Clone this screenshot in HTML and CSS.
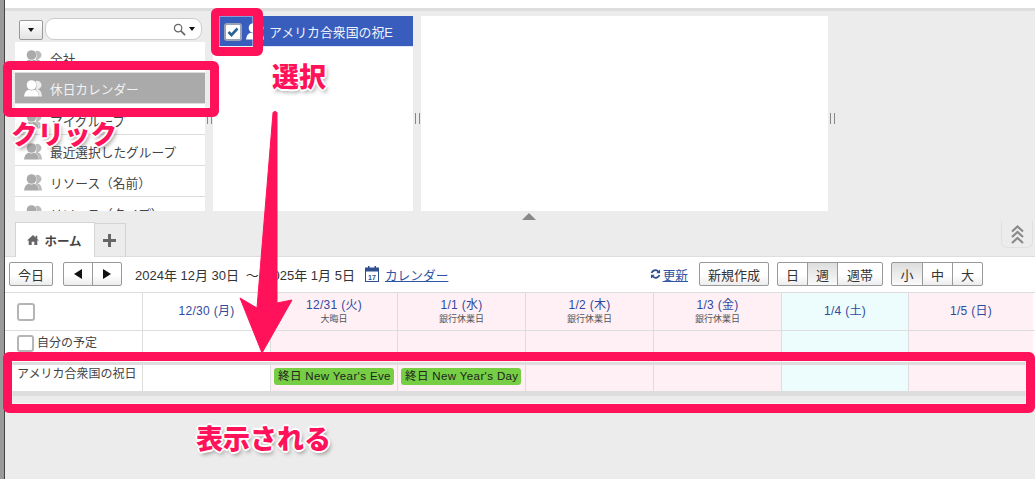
FILE: index.html
```html
<!DOCTYPE html>
<html lang="ja">
<head>
<meta charset="utf-8">
<title>カレンダー</title>
<link rel="stylesheet" href="styles.css">
</head>
<body>
<svg width="0" height="0" class="defs">
  <symbol id="people" viewBox="0 0 18 17">
    <path d="M11.500 1.200a4.200 4.200 0 1 1 1.800 8c2.700.3 4.400 2.800 4.700 7.300h-2.800c-.3-3.200-1.300-5.500-3.600-6.800 1.300-2.500 1.200-6-.1-8.500z" opacity=".8"/>
    <circle cx="7.500" cy="5" r="4.800"/>
    <path d="M0 16.500c.4-4 2.200-6.200 4.700-6.800 1.700 1 3.900 1 5.600 0 2.500.6 4.300 2.800 4.700 6.800z"/>
  </symbol>
</svg>
<div class="page">
  <div class="topbar"></div>
  <div class="panels">
    <div class="col-groups">
      <div class="search-row">
        <button class="drop-btn"><span class="caret"></span></button>
        <div class="search-box">
          <svg class="lens" viewBox="0 0 14 14"><circle cx="5.500" cy="5.500" r="4" fill="none" stroke="#666" stroke-width="1.300"/><path d="M8.500 8.500l4.500 4.500" stroke="#666" stroke-width="1.800"/></svg>
          <span class="caret"></span>
        </div>
      </div>
      <ul class="group-list">
        <li class="group"><svg class="ppl"><use href="#people"/></svg>全社</li>
        <li class="group selected"><svg class="ppl"><use href="#people"/></svg>休日カレンダー</li>
        <li class="group"><svg class="ppl"><use href="#people"/></svg>マイグループ</li>
        <li class="group"><svg class="ppl"><use href="#people"/></svg>最近選択したグループ</li>
        <li class="group"><svg class="ppl"><use href="#people"/></svg>リソース（名前）</li>
        <li class="group"><svg class="ppl"><use href="#people"/></svg>リソース（タイプ）</li>
      </ul>
    </div>
    <div class="splitter"><i></i></div>
    <div class="col-members">
      <div class="member">
        <span class="check"><svg viewBox="0 0 14 14"><path d="M2.500 7l3 3 6-6.500" fill="none" stroke="#2a6496" stroke-width="2.600"/></svg></span>
        <svg class="member-ic"><use href="#people"/></svg>
        <span class="member-name">アメリカ合衆国の祝E</span>
      </div>
    </div>
    <div class="splitter"><i></i></div>
    <div class="col-blank"></div>
    <div class="splitter"><i></i></div>
  </div>
  <div class="collapse-row"><span class="tri"></span></div>
  <div class="tabs">
    <div class="tab home">
      <svg class="home-ic" viewBox="0 0 12 10"><path d="M6 0L0 5.500h1.700V10h3V6.800h2.600V10h3V5.500H12L10.300 4V.8H8.600v1.600z" fill="#666"/></svg>ホーム
    </div>
    <div class="tab plus">
      <svg viewBox="0 0 13 13"><path d="M5 0h3v5h5v3H8v5H5V8H0V5h5z" fill="#666"/></svg>
    </div>
    <div class="expand">
      <svg viewBox="0 0 13 19"><path d="M1 6.500l5.500-5 5.500 5M1 12l5.500-5 5.500 5M1 18l5.500-5 5.500 5" fill="none" stroke="#8a8a8a" stroke-width="2.200"/></svg>
    </div>
  </div>
  <div class="toolbar">
    <button class="btn today">今日</button>
    <div class="btn-group arrows">
      <button class="btn seg"><span class="tl"></span></button>
      <button class="btn seg"><span class="tr"></span></button>
    </div>
    <span class="range">2024年 12月 30日 <span class="tilde">～</span> 2025年 1月 5日</span>
    <svg class="cal-ic" viewBox="0 0 14 16"><rect x=".5" y="2" width="13" height="13.500" fill="#fff" stroke="#2f4f8f"/><rect x=".5" y="2" width="13" height="3.500" fill="#2f4f8f"/><rect x="3" y="0" width="1.500" height="3" fill="#2f4f8f"/><rect x="9.500" y="0" width="1.500" height="3" fill="#2f4f8f"/><text x="7" y="13.500" class="cal-num">17</text></svg>
    <a class="link cal-link">カレンダー</a>
    <span class="spacer"></span>
    <svg class="refresh" viewBox="0 0 12 12"><path d="M.8 5a5 5 0 0 1 8.500-2.600L11 1v4.200H6.800l1.400-1.500A3.400 3.400 0 0 0 2.800 5zM11.200 7a5 5 0 0 1-8.500 2.600L1 11V6.800h4.200L3.800 8.300A3.400 3.400 0 0 0 9.200 7z" fill="#2f4f8f"/></svg>
    <a class="link refresh-link">更新</a>
    <button class="btn create">新規作成</button>
    <div class="btn-group views">
      <button class="btn seg">日</button>
      <button class="btn seg on">週</button>
      <button class="btn seg wide">週帯</button>
    </div>
    <div class="btn-group sizes">
      <button class="btn seg on">小</button>
      <button class="btn seg">中</button>
      <button class="btn seg">大</button>
    </div>
  </div>
  <div class="cal">
    <div class="row head">
      <div class="cell first"><span class="box big"></span></div>
      <div class="cell day"><b>12/30 (月)</b></div>
      <div class="cell day hol"><b>12/31 (火)</b><small>大晦日</small></div>
      <div class="cell day hol"><b>1/1 (水)</b><small>銀行休業日</small></div>
      <div class="cell day hol"><b>1/2 (木)</b><small>銀行休業日</small></div>
      <div class="cell day hol"><b>1/3 (金)</b><small>銀行休業日</small></div>
      <div class="cell day sat"><b>1/4 (土)</b></div>
      <div class="cell day hol"><b>1/5 (日)</b></div>
    </div>
    <div class="row mine">
      <div class="cell first"><span class="box"></span>自分の予定</div>
      <div class="cell"></div>
      <div class="cell hol"></div><div class="cell hol"></div><div class="cell hol"></div><div class="cell hol"></div>
      <div class="cell sat"></div>
      <div class="cell hol"></div>
    </div>
    <div class="band"></div>
    <div class="row holiday">
      <div class="cell first">アメリカ合衆国の祝日</div>
      <div class="cell"></div>
      <div class="cell hol"><span class="ev">終日 New Year's Eve</span></div>
      <div class="cell hol"><span class="ev">終日 New Year's Day</span></div>
      <div class="cell hol"></div><div class="cell hol"></div>
      <div class="cell sat"></div>
      <div class="cell hol"></div>
    </div>
    <div class="band low"></div>
  </div>
</div>

<div class="mark mark-select"></div>
<div class="mark mark-click"></div>
<div class="mark mark-row"></div>
<svg class="arrow" viewBox="0 0 60 245"><path d="M35 3c0-2 4-2 4 0L39 193l15-3-30 53L2 188l17 10z" fill="#ff1259" stroke="#ff1259" stroke-linejoin="round"/></svg>
<span class="note note-select">選択</span>
<span class="note note-click">クリック</span>
<span class="note note-show">表示される</span>
</body>
</html>
```
FILE: styles.css
```css
* { box-sizing: border-box; }
html, body { margin: 0; height: 100%; }
body {
  position: relative;
  width: 1035px;
  height: 479px;
  overflow: hidden;
  background: #9a9a9a;
  font-family: "Liberation Sans", "Noto Sans CJK JP", sans-serif;
  font-size: 12px;
  color: #333;
}
.defs { position: absolute; }
.page {
  margin-left: 4px;
  width: 1031px;
  height: 479px;
  background: #ececec;
  border-left: 1px solid #444;
  display: flex;
  flex-direction: column;
}
.topbar { height: 11px; background: #fff; border-bottom: 3px solid #ddd; flex: none; }
.panels { display: flex; height: 195px; margin: 5px 0 0 10px; flex: none; }
.col-groups { width: 190px; display: flex; flex-direction: column; }
.search-row { display: flex; gap: 2px; height: 26px; padding: 2px 0 0 4px; flex: none; }
.drop-btn {
  width: 24px; height: 20px; margin-top: 2px; padding: 0; border: 1px solid #999; border-radius: 2px;
  background: linear-gradient(#fff, #e4e4e4); display: flex; align-items: center; justify-content: center;
}
.caret { display: inline-block; width: 0; height: 0; border: 3px solid transparent; border-top: 4px solid #111; border-bottom: 0; }
.search-box {
  width: 157px; height: 22px; border: 1px solid #ccc; border-radius: 9px; background: #fff;
  display: flex; align-items: center; justify-content: flex-end; gap: 3px; padding-right: 6px;
}
.lens { width: 13px; height: 13px; }
.group-list { list-style: none; margin: 0; padding: 0; height: 169px; overflow: hidden; background: #fff; flex: none; }
.group {
  height: 31px; border-bottom: 1px solid #ddd; display: flex; align-items: center;
  padding: 2px 0 0 9px; font-size: 12.700px; color: #444; flex: none;
}
.ppl { width: 18px; height: 17px; margin-right: 8px; fill: #aaa; flex: none; }
.group.selected { background: #aaa; color: #f2f2f2; padding-top: 1px; }
.group.selected .ppl { fill: #fff; }
.col-members { width: 200px; background: #fff; }
.member { height: 31px; background: #395dbd; display: flex; align-items: center; padding: 1px 0 0 11px; color: #f0f3fb; font-size: 12.900px; overflow: hidden; border-bottom: 1px solid #dfe6f5; }
.check { width: 18px; height: 18px; background: #fff; border: 2px solid #9aa3b5; border-radius: 3px; flex: none; display: flex; }
.check svg { width: 14px; height: 14px; }
.member-ic { width: 18px; height: 17px; fill: #fff; margin-left: 4px; flex: none; }
.member-name { margin-left: 5px; white-space: nowrap; }
.splitter { width: 8px; align-self: center; display: flex; justify-content: center; margin-top: 10px; }
.splitter i { display: block; width: 5px; height: 11px; border-left: 1px solid #888; border-right: 1px solid #888; }
.col-blank { width: 407px; background: #fff; }
.collapse-row { height: 10px; width: 1048px; display: flex; justify-content: center; padding-top: 2px; flex: none; }
.tri { width: 0; height: 0; border: 7px solid transparent; border-top: 0; border-bottom: 7px solid #888; }
.tabs { height: 36px; display: flex; align-items: flex-end; padding-left: 10px; flex: none; position: relative; border-bottom: 1px solid #ddd; }
.tab { height: 34px; border: 1px solid #d4d4d4; display: flex; align-items: center; justify-content: center; }
.tab.home { width: 80px; background: #fff; border-bottom: 0; font-size: 12.500px; font-weight: bold; color: #444; gap: 5px; margin-bottom: -1px; height: 35px; padding-right: 1px; }
.home-ic { width: 12px; height: 10px; }
.tab.plus { width: 31px; border-left: 0; border-bottom: 0; height: 34px; margin-bottom: -1px; padding-right: 2px; }
.tab.plus svg { width: 13px; height: 13px; }
.expand { position: absolute; right: 2px; top: 0; width: 32px; height: 27px; border: 1px solid #e0e0e0; border-top: 0; border-radius: 0 0 6px 6px; display: flex; align-items: center; justify-content: center; }
.expand svg { width: 13px; height: 19px; }
.toolbar { height: 35px; background: #fff; display: flex; align-items: center; padding: 0 52px 1px 4px; flex: none; }
.btn {
  height: 24px; padding: 0; border: 1px solid #999; border-radius: 2px; background: linear-gradient(#fff 55%, #ececec);
  font: 13px "Liberation Sans", "Noto Sans CJK JP", sans-serif; color: #333; display: inline-flex; align-items: center; justify-content: center;
}
.today { width: 44px; }
.btn-group { display: flex; }
.btn-group .seg { border-radius: 0; margin-left: -1px; }
.btn-group .seg:first-child { border-radius: 2px 0 0 2px; margin-left: 0; }
.btn-group .seg:last-child { border-radius: 0 2px 2px 0; }
.arrows { margin-left: 10px; }
.arrows .seg { width: 30px; }
.tl, .tr { width: 0; height: 0; border: 5px solid transparent; }
.tl { border-right: 8px solid #111; border-left: 0; }
.tr { border-left: 8px solid #111; border-right: 0; }
.range { margin-left: 13px; font-size: 13px; color: #333; white-space: nowrap; }
.tilde { margin: 0 3px 0 3px; }
.cal-ic { width: 14px; height: 16px; margin-left: 10px; }
.cal-num { font-size: 7px; font-weight: bold; fill: #2f4f8f; text-anchor: middle; }
.link { color: #2f55a4; text-decoration: underline; font-size: 12.700px; white-space: nowrap; }
.cal-link { margin-left: 6px; }
.spacer { flex: 1; }
.refresh { width: 11px; height: 12px; margin-right: 2px; }
.create { width: 70px; margin-left: 11px; }
.views { margin-left: 8px; }
.views .seg { width: 31px; }
.views .seg.wide { width: 46px; }
.sizes { margin-left: 8px; }
.sizes .seg { width: 32px; }
.sizes .seg + .seg { width: 31px; }
.seg.on { background: linear-gradient(#ddd, #fafafa); }
.cal { background: #fff; flex: none; }
.row { display: grid; grid-template-columns: 138px 128px 127px 128px 128px 128px 127px 124px; border-top: 1px solid #ddd; }
.cell { border-right: 1px solid #ddd; }
.cell:last-child { border-right: 0; }
.head { height: 38px; }
.mine { height: 32px; }
.holiday { height: 26px; border-top: 0; }
.band { height: 3px; background: #ddd; }
.band.low { height: 5px; }
.hol { background: #fff0f5; }
.sat { background: #edfdfd; }
.day { display: flex; flex-direction: column; align-items: center; justify-content: center; }
.day b { font-weight: normal; font-size: 12px; color: #2f4a9c; letter-spacing: .3px; line-height: 15px; }
.day small { font-size: 9px; color: #555; line-height: 12px; }
.first { padding-left: 12px; display: flex; align-items: center; font-size: 12px; color: #444; }
.mine .first { align-items: flex-start; padding-top: 4px; line-height: 17px; }
.holiday .first { align-items: flex-start; padding-top: 1px; line-height: 17px; }
.box { width: 17px; height: 17px; border: 2px solid #b5b5b5; border-radius: 3px; background: #fff; flex: none; }
.box.big { width: 18px; height: 18px; }
.mine .box { margin-right: 3px; }
.holiday .hol { padding: 3px 0 0 3px; }
.ev { display: inline-block; height: 17px; line-height: 16px; padding: 0 3px 0 4px; background: #75ce43; border-radius: 3px; color: #222; font-size: 11.500px; letter-spacing: .38px; white-space: nowrap; }

/* annotation overlays */
.mark { position: absolute; border: 9px solid #ff1259; border-radius: 6px; box-shadow: inset 0 0 0 1px rgba(255,255,255,.4); }
.mark-select { left: 211px; top: 8px; width: 52px; height: 48px; border-width: 8px 10px 9px 8px; }
.mark-click { left: 3px; top: 61px; width: 216px; height: 56px; }
.mark-row { left: 3px; top: 352px; width: 1032px; height: 61px; }
.arrow { position: absolute; left: 238px; top: 110px; width: 60px; height: 245px; }
.note {
  position: absolute; font-family: "Noto Sans CJK JP", sans-serif; font-weight: 900; font-size: 27px; line-height: 30px; color: #ff1259; white-space: nowrap;
  text-shadow: -2px 0 0 #fff, 2px 0 0 #fff, 0 -2px 0 #fff, 0 2px 0 #fff, -1px -1px 0 #fff, 1px -1px 0 #fff, -1px 1px 0 #fff, 1px 1px 0 #fff, 2px 3px 4px rgba(0,0,0,.4);
}
.note-select { left: 272px; top: 61px; }
.note-click { left: 11px; top: 118px; font-size: 26.500px; }
.note-show { left: 196px; top: 423px; }
```
